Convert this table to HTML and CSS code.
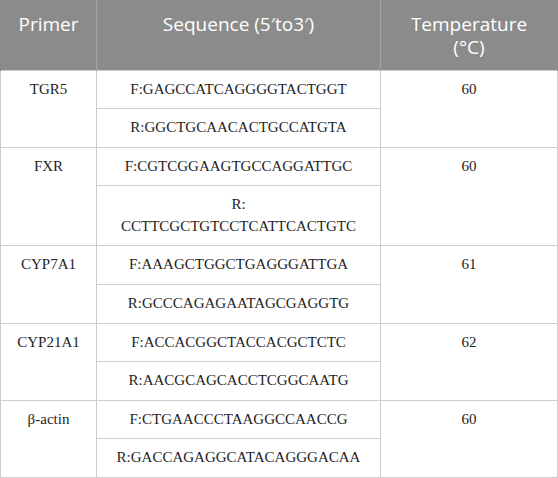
FILE: index.html
```html
<!DOCTYPE html>
<html>
<head>
<meta charset="utf-8">
<link rel="stylesheet" href="styles.css">
</head>
<body>
<table class="primers">
  <colgroup>
    <col class="c1"><col class="c2"><col class="c3">
  </colgroup>
  <thead>
    <tr>
      <th>Primer</th>
      <th>Sequence (5′to3′)</th>
      <th>Temperature<br>(°C)</th>
    </tr>
  </thead>
  <tbody>
    <tr><td rowspan="2">TGR5</td><td>F:GAGCCATCAGGGGTACTGGT</td><td rowspan="2">60</td></tr>
    <tr><td>R:GGCTGCAACACTGCCATGTA</td></tr>
    <tr><td rowspan="2">FXR</td><td>F:CGTCGGAAGTGCCAGGATTGC</td><td rowspan="2">60</td></tr>
    <tr><td>R:<br>CCTTCGCTGTCCTCATTCACTGTC</td></tr>
    <tr><td rowspan="2">CYP7A1</td><td>F:AAAGCTGGCTGAGGGATTGA</td><td rowspan="2">61</td></tr>
    <tr><td>R:GCCCAGAGAATAGCGAGGTG</td></tr>
    <tr><td rowspan="2">CYP21A1</td><td>F:ACCACGGCTACCACGCTCTC</td><td rowspan="2">62</td></tr>
    <tr><td>R:AACGCAGCACCTCGGCAATG</td></tr>
    <tr><td rowspan="2">β-actin</td><td>F:CTGAACCCTAAGGCCAACCG</td><td rowspan="2">60</td></tr>
    <tr><td>R:GACCAGAGGCATACAGGGACAA</td></tr>
  </tbody>
</table>
</body>
</html>
```

FILE: styles.css
```css
html, body {
  margin: 0;
  padding: 0;
  background: #ffffff;
}

.primers {
  border-collapse: collapse;
  width: 557px;
  table-layout: fixed;
}

.c1 { width: 96px; }
.c2 { width: 284px; }
.c3 { width: 177px; }

.primers th {
  background: #8b8b8b;
  color: #ffffff;
  font-family: "Open Sans", "Noto Sans", sans-serif;
  font-weight: normal;
  font-size: 19px;
  line-height: 23px;
  height: 70px;
  box-sizing: border-box;
  padding: 13px 6px 10px;
  vertical-align: top;
  text-align: center;
  border-left: 1px solid #a3a3a3;
  border-right: 1px solid #a3a3a3;
}

.primers th:first-child { border-left: 1px solid #8b8b8b; }
.primers th:last-child { border-right: 1px solid #8b8b8b; }

.primers td {
  font-family: "Liberation Serif", "Times New Roman", serif;
  font-size: 15px;
  line-height: 21.6px;
  color: #1e1e1e;
  text-align: center;
  vertical-align: top;
  padding: 8px 6px 8px;
  border: 1px solid #cccccc;
}
```
